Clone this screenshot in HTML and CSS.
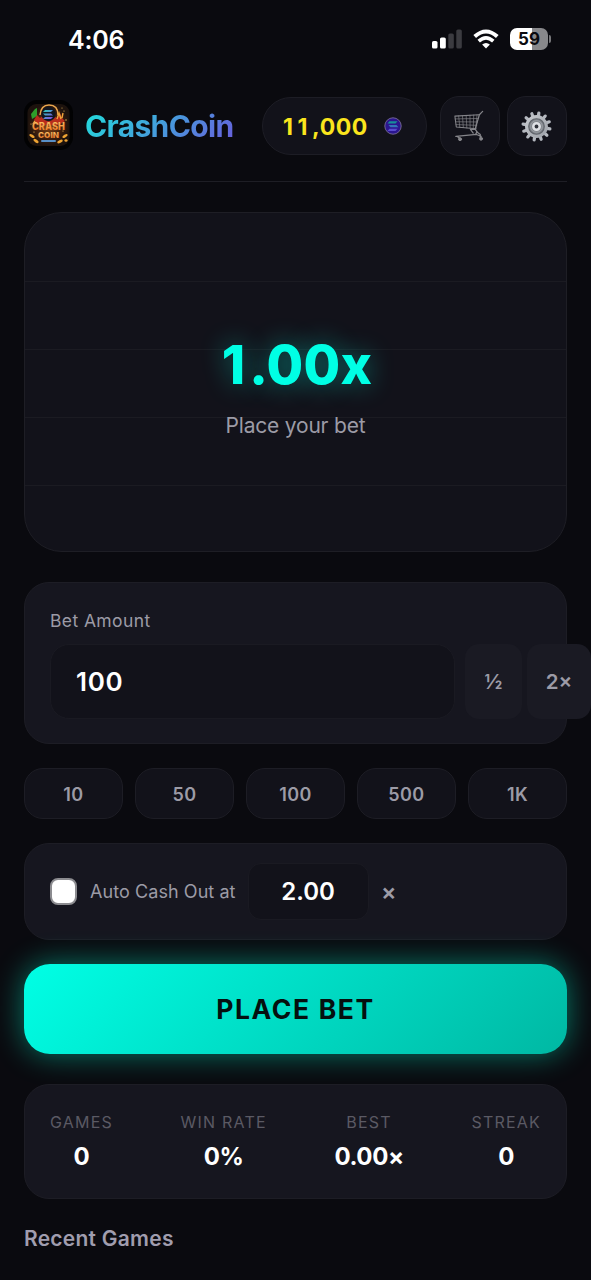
FILE: index.html
```html
<!DOCTYPE html>
<html lang="en">
<head>
<meta charset="utf-8">
<title>CrashCoin</title>
<link rel="stylesheet" href="styles.css">
</head>
<body>
<div class="statusbar">
  <span class="clock">4:06</span>
  <div class="status-icons">
    <svg class="signal" width="31" height="20" viewBox="0 0 31 20">
      <rect x="0" y="12" width="5.500" height="7.500" rx="1.600" fill="#fff"/>
      <rect x="8" y="8.500" width="5.800" height="11" rx="1.600" fill="#fff"/>
      <rect x="16.300" y="4.500" width="5.500" height="15" rx="1.600" fill="#3b3b40"/>
      <rect x="24.300" y="0.500" width="5.500" height="19" rx="1.600" fill="#3b3b40"/>
    </svg>
    <svg class="wifi" width="26" height="20" viewBox="0 0 26 20">
      <path d="M1.700 7.600Q13-2.600 24.300 7.600" fill="none" stroke="#fff" stroke-width="4"/>
      <path d="M5.700 12.200Q13 5.600 20.300 12.200" fill="none" stroke="#fff" stroke-width="3.600"/>
      <path d="M9.100 15.600Q13 12.200 16.900 15.600L13 19.600Z" fill="#fff"/>
    </svg>
    <div class="battery"><span>59</span></div>
  </div>
</div>
<main class="app">
  <header class="header">
    <svg class="logo" width="50" height="50" viewBox="0 0 50 50">
      <defs>
        <radialGradient id="glow"><stop offset="0" stop-color="#8a4a18"/><stop offset=".55" stop-color="#47220e"/><stop offset="1" stop-color="#1c120d"/></radialGradient>
        <linearGradient id="gold" x1="0" y1="0" x2="0" y2="1"><stop offset="0" stop-color="#ffd070"/><stop offset="1" stop-color="#f07422"/></linearGradient>
        <linearGradient id="sol" x1="0" y1="0" x2="1" y2="1"><stop offset="0" stop-color="#24d5b5"/><stop offset="1" stop-color="#8942e5"/></linearGradient>
      </defs>
      <rect width="49" height="50" rx="13" fill="#020203"/>
      <rect x="3.500" y="4" width="42" height="42" rx="9" fill="url(#glow)"/>
      <path d="M7 14l4-5 2-1v8l-5 3z" fill="#2d9f2b"/>
      <path d="M10 20l3-5 3 3 4-3 3 4 5-4 5 3 3-5 2 5 3 3-6 4H14z" fill="#b92d1c"/>
      <path d="M16 15q1-10 9-10 9 0 9 10" fill="none" stroke="#e8a64d" stroke-width="1.500"/>
      <circle cx="24.500" cy="14" r="7.200" fill="#11161f"/>
      <path d="M21 10h8l-2 2h-8zM19 13.500h8l2 2h-8zM21 17h8l-2 2h-8z" fill="url(#sol)"/>
      <path d="M33 19l2-6 2 6M38 18l1-5M9 24l2-3" stroke="#f1a53b" stroke-width="1.400" fill="none"/>
      <g fill="#ffc65b"><circle cx="7" cy="24" r=".6"/><circle cx="40" cy="11" r=".6"/><circle cx="42" cy="20" r=".7"/><circle cx="38" cy="8" r=".5"/><circle cx="10" cy="32" r=".6"/><circle cx="39" cy="31" r=".6"/></g>
      <g fill="#eea332"><ellipse cx="8" cy="36" rx="3" ry="1.300" transform="rotate(30 8 36)"/><ellipse cx="12" cy="41" rx="3" ry="1.400" transform="rotate(35 12 41)"/><ellipse cx="41" cy="36" rx="3" ry="1.300" transform="rotate(-30 41 36)"/><ellipse cx="36" cy="41.500" rx="3" ry="1.400" transform="rotate(-25 36 41.500)"/><ellipse cx="42" cy="40.500" rx="1.600" ry="1.200"/></g>
      <g class="logo-text" text-anchor="middle">
        <text x="24.500" y="29.500" font-size="10" textLength="33" lengthAdjust="spacingAndGlyphs">CRASH</text>
        <text x="24.500" y="38" font-size="8" textLength="21" lengthAdjust="spacingAndGlyphs">COIN</text>
      </g>
      <rect x="17" y="40" width="15" height="2" rx="1" fill="#588fc5"/>
    </svg>
    <h1 class="brand">CrashCoin</h1>
    <div class="balance">
      <span class="amount"><span class="ones">11</span>,000</span>
      <svg class="coin" width="18" height="18" viewBox="0 0 18 18">
        <circle cx="9" cy="9" r="8.200" fill="#2b1590" stroke="#6f6390" stroke-width="1"/>
        <path d="M5.500 4.200h8l-2 2.200h-8z" fill="#178f98"/><path d="M4.500 8h8l2 2.200h-8z" fill="#3474b8"/><path d="M5.500 11.800h8l-2 2.200h-8z" fill="#5a4bd0"/>
      </svg>
    </div>
    <button class="icon-btn shop" aria-label="Shop">
      <svg width="32" height="32" viewBox="0 0 34 34" fill="none" stroke="#85858a" stroke-linecap="round" stroke-linejoin="round">
        <path d="M31.500 1.500L28 5l-4.500 15.500 2 2.500-1.500 3" stroke-width="1.300"/>
        <path d="M2 6.500l26-1.500M2 6.500l1.500 11.500 21 2" stroke-width="1.100"/>
        <path d="M2.300 9.500l24.700-.5M3 12.500l23 .2M3.300 15.500l22 .8M6 6.300l1.200 12M10 6l1 12.700M14 5.800l.7 13.300M18 5.500l.2 13.800M22 5.300l-.5 14.400M25.500 5.200l-1.200 14.400" stroke-width=".7"/>
        <path d="M24 20.500h-5.500l3 4M25 23l4 3v3M3 28l22-2 5 2M4 28l4 2.500" stroke-width="1.300"/>
        <circle cx="7.500" cy="31" r="1.600" fill="#85858a"/><circle cx="29.800" cy="30.500" r="1.600" fill="#85858a"/>
      </svg>
    </button>
    <button class="icon-btn" aria-label="Settings">
      <svg width="33" height="33" viewBox="-17 -17 34 34">
        <defs><linearGradient id="steel" x1="0" y1="0" x2="1" y2="1"><stop offset="0" stop-color="#c9ccd1"/><stop offset="1" stop-color="#9b9fa6"/></linearGradient></defs>
        <g stroke="#b4b8bf" stroke-width="3.300" stroke-linecap="round">
          <path transform="rotate(10)" d="M0-14V14M-14 0H14M-12.120-7L12.120 7M-12.120 7L12.120-7M-7-12.120L7 12.120M-7 12.120L7-12.120"/>
        </g>
        <circle r="11.800" fill="url(#steel)"/>
        <circle r="8" fill="#82868c" stroke="#60646b" stroke-width="1.200"/>
        <circle r="6" fill="none" stroke="#9a9ea4" stroke-width="1"/>
        <circle r="3.300" fill="#30333b" stroke="#dfe1e5" stroke-width="2.600"/>
      </svg>
    </button>
  </header>

  <section class="game">
    <div class="grid"><i></i><i></i><i></i><i></i><i></i></div>
    <div class="multiplier"><span class="whole">1</span>.00x</div>
    <div class="hint">Place your bet</div>
  </section>

  <section class="panel bet">
    <div class="label">Bet Amount</div>
    <div class="bet-row">
      <div class="field">100</div>
      <button class="mod half">½</button>
      <button class="mod double">2×</button>
    </div>
  </section>

  <div class="chips">
    <button class="chip">10</button><button class="chip">50</button><button class="chip">100</button><button class="chip">500</button><button class="chip">1K</button>
  </div>

  <section class="panel auto">
    <span class="checkbox"></span>
    <span class="auto-label">Auto Cash Out at</span>
    <div class="field auto-field">2.00</div>
    <span class="times">×</span>
  </section>

  <button class="place"><span>PLACE BET</span></button>

  <section class="panel stats">
    <div class="stat"><span class="stat-label">GAMES</span><b>0</b></div>
    <div class="stat"><span class="stat-label">WIN RATE</span><b>0%</b></div>
    <div class="stat"><span class="stat-label">BEST</span><b>0.00×</b></div>
    <div class="stat"><span class="stat-label">STREAK</span><b>0</b></div>
  </section>

  <h2 class="recent">Recent Games</h2>
</main>
</body>
</html>
```
FILE: styles.css
```css
* { box-sizing: border-box; }
body {
  margin: 0;
  width: 591px;
  height: 1280px;
  overflow: hidden;
  background: #0a0a0f;
  color: #fff;
  font-family: Inter, "Liberation Sans", sans-serif;
}
button { font-family: inherit; padding: 0; margin: 0; border: 0; }
svg { display: block; flex: none; }

.statusbar {
  height: 96px;
  padding: 24px 43px 0 68px;
  display: flex;
  justify-content: space-between;
  align-items: flex-start;
}
.clock { font-size: 25px; line-height: 32px; font-weight: 600; letter-spacing: -0.2px; }
.status-icons { display: flex; align-items: center; padding-top: 4px; }
.signal { margin-right: 10px; }
.wifi { margin-right: 11px; }
.battery {
  width: 38px;
  height: 22px;
  border-radius: 7px;
  background: linear-gradient(90deg, #fff 59%, #88888b 59%);
  color: #0a0a0f;
  font-size: 17px;
  line-height: 22px;
  font-weight: 700;
  text-align: center;
  position: relative;
}
.battery::after {
  content: "";
  position: absolute;
  left: 39px;
  top: 7px;
  width: 2px;
  height: 8px;
  border-radius: 0 3px 3px 0;
  background: #77777a;
}

.app { padding: 0 24px; }
.header {
  height: 86px;
  display: flex;
  align-items: flex-start;
  border-bottom: 1px solid #1e1e25;
}
.logo { margin: 4px 11px 0 0; }
.logo-text { font-weight: 900; fill: url(#gold); stroke: #61200c; stroke-width: .2; }
.brand {
  flex: none;
  margin: 11px 0 0;
  width: 177px;
  font-size: 30px;
  line-height: 38px;
  font-weight: 700;
  letter-spacing: -0.650px;
  background: linear-gradient(135deg, #20e0dc 0, #6f52dc 142px);
  background-clip: text;
  -webkit-background-clip: text;
  color: transparent;
}
.balance {
  flex: none;
  width: 165px;
  height: 58px;
  margin: 1px 13px 0 0;
  padding: 0 24px 0 20px;
  border: 1px solid #1d1d25;
  border-radius: 30px;
  background: #12121a;
  display: flex;
  align-items: center;
  justify-content: space-between;
}
.amount {
  font-size: 23px;
  line-height: 30px;
  padding-top: 1px;
  font-weight: 700;
  letter-spacing: 0.600px;
  color: #fae51d;
}
.ones { letter-spacing: 4.600px; }
.icon-btn {
  flex: none;
  width: 60px;
  height: 60px;
  padding-right: 2px;
  border: 1px solid #1d1d25;
  border-radius: 19px;
  background: #12121a;
  display: flex;
  align-items: center;
  justify-content: center;
}
.shop { margin-right: 7px; }

.game {
  margin-top: 30px;
  height: 340px;
  border: 1px solid #1e1e25;
  border-radius: 38px;
  background: #12121a;
  position: relative;
  overflow: hidden;
  display: flex;
  flex-direction: column;
  align-items: center;
  padding-top: 117px;
}
.grid {
  position: absolute;
  inset: 0;
  display: flex;
  flex-direction: column;
}
.grid i { height: 68px; border-bottom: 1px solid #1b1b22; flex: none; }
.grid i:first-child { height: 69px; }
.grid i:last-child { border: 0; }
.multiplier {
  position: relative;
  padding-left: 3px;
  font-size: 53px;
  line-height: 70px;
  font-weight: 800;
  letter-spacing: 0.300px;
  color: #00ffe5;
  text-shadow: 0 0 26px rgba(0, 255, 229, .42);
}
.whole { letter-spacing: 4px; }
.hint {
  position: relative;
  margin-top: 11px;
  font-size: 21px;
  line-height: 30px;
  letter-spacing: -0.200px;
  color: #9c9ba6;
}

.panel {
  border: 1px solid #1d1d25;
  border-radius: 25px;
  background: #16161f;
}
.bet { margin-top: 30px; height: 162px; padding: 25px 0 0 25px; }
.label { font-size: 17.500px; line-height: 26px; letter-spacing: 0.4px; color: #9c9ba6; }
.bet-row { display: flex; margin-top: 10px; }
.field {
  flex: none;
  width: 405px;
  height: 75px;
  border: 1px solid #1a1a22;
  border-radius: 19px;
  background: #12121a;
  padding-left: 25px;
  font-size: 26px;
  font-weight: 600;
  letter-spacing: 0.700px;
  line-height: 73px;
}
.mod {
  flex: none;
  height: 75px;
  border-radius: 14px;
  background: #1a1a23;
  color: #9c9ba6;
  font-size: 20.500px;
  font-weight: 600;
}
.half { width: 57px; margin-left: 10px; }
.double { width: 64px; margin-left: 5px; }

.chips {
  margin-top: 24px;
  display: grid;
  grid-template-columns: repeat(5, 1fr);
  gap: 12px;
}
.chip {
  height: 51px;
  padding-top: 1px;
  border: 1px solid #1d1d25;
  border-radius: 19px;
  background: #12121a;
  color: #9c9ba6;
  font-size: 18px;
  font-weight: 600;
  letter-spacing: 0.4px;
}

.auto {
  margin-top: 24px;
  height: 97px;
  display: flex;
  align-items: center;
  padding-left: 25px;
}
.checkbox {
  width: 27px;
  height: 27px;
  border: 2px solid #8c8c90;
  border-radius: 8px;
  background: #fff;
}
.auto-label { margin-left: 13px; width: 158px; font-size: 18px; letter-spacing: 0.070px; color: #9c9ba6; white-space: nowrap; }
.auto-field { width: 121px; height: 57px; border-radius: 13px; padding: 0 1px 0 0; line-height: 56px; text-align: center; font-size: 24px; letter-spacing: 0; }
.times { margin-left: 12px; font-size: 23px; font-weight: 600; color: #9c9ba6; }

.place {
  display: block;
  width: 543px;
  height: 90px;
  margin-top: 24px;
  border-radius: 26px;
  background: linear-gradient(135deg, #00ffe5 0%, #00b8a3 100%);
  box-shadow: 0 0 30px rgba(0, 255, 209, .46);
  color: #05100f;
  font-size: 26.500px;
  font-weight: 700;
  letter-spacing: 1.600px;
}
.stats {
  position: relative;
  margin-top: 30px;
  height: 115px;
  padding: 25px 25px 0;
  display: flex;
  justify-content: space-between;
}
.stat { display: flex; flex-direction: column; align-items: center; }
.stat-label { font-size: 16px; line-height: 24px; letter-spacing: 1.200px; color: #5b5a64; }
.stat b { margin-top: 7px; font-size: 24px; line-height: 32px; font-weight: 700; letter-spacing: -0.4px; }
.recent {
  margin: 25px 0 0;
  font-size: 21px;
  line-height: 30px;
  font-weight: 600;
  letter-spacing: 0.250px;
  color: #a09dae;
}
```
